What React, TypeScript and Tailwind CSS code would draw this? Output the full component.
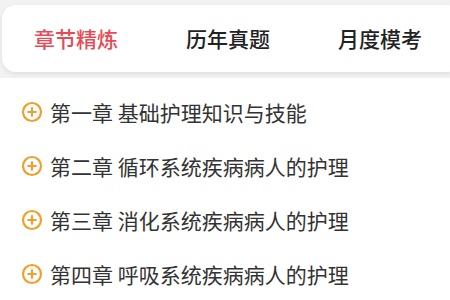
import React from 'react';

const tabs = ['章节精炼', '历年真题', '月度模考'];

const chapters = [
  '第一章 基础护理知识与技能',
  '第二章 循环系统疾病病人的护理',
  '第三章 消化系统疾病病人的护理',
  '第四章 呼吸系统疾病病人的护理',
];

function PlusCircle() {
  return (
    <svg width="22" height="22" viewBox="0 0 22 22" className="shrink-0">
      <circle cx="11" cy="11" r="9" fill="none" stroke="#f2a02c" strokeWidth="2.2" />
      <path d="M11 7.2v7.6M7.2 11h7.6" stroke="#f2a02c" strokeWidth="2.2" strokeLinecap="round" />
    </svg>
  );
}

export default function App() {
  return (
    <div
      className="w-[450px] h-[300px] overflow-hidden bg-white"
      style={{ fontFamily: '"Noto Sans CJK SC", "Noto Sans", sans-serif' }}
    >
      {/* Tabs */}
      <div className="bg-[#f2f2f3] pt-[5px] pl-[2px] pb-[6px]">
        <div className="h-[67px] w-[460px] bg-white rounded-[14px] shadow-[0_2px_5px_rgba(0,0,0,0.08)] flex items-center">
          {tabs.map((t, i) => (
            <div
              key={t}
              className={
                'text-[21px] font-medium leading-none ' +
                (i === 0 ? 'text-[#e84a55] ml-[32px]' : 'text-[#222222] ml-[68px]')
              }
            >
              {t}
            </div>
          ))}
        </div>
      </div>

      {/* Chapter list */}
      <div className="pt-[7px]">
        {chapters.map((c) => (
          <div key={c} className="h-[54px] flex items-center pl-[21px] gap-[7px]">
            <PlusCircle />
            <span className="text-[21px] text-[#333333] leading-none">{c}</span>
          </div>
        ))}
      </div>
    </div>
  );
}
